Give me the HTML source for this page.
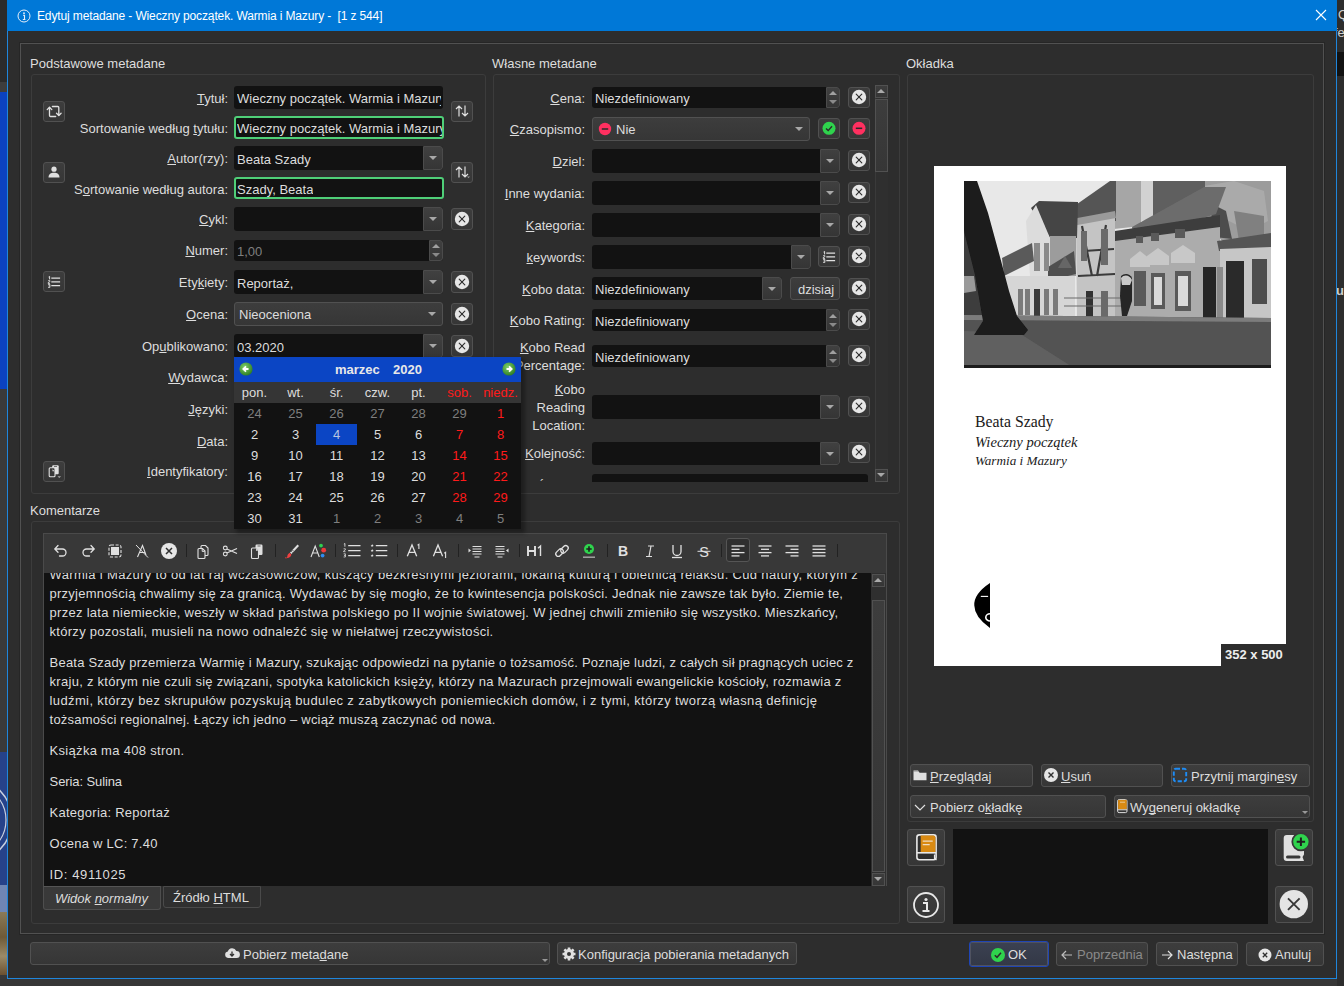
<!DOCTYPE html><html><head><meta charset="utf-8"><style>
*{margin:0;padding:0;box-sizing:border-box}
html,body{width:1344px;height:986px;overflow:hidden;background:#2d2d2d}
body{position:relative;font-family:"Liberation Sans",sans-serif;font-size:13px;color:#dddddd}
.a{position:absolute}
.t{position:absolute;white-space:nowrap;line-height:16px;height:16px}
.r{text-align:right}
u{text-decoration:underline;text-underline-offset:1px;text-decoration-thickness:1px;text-decoration-skip-ink:none}
.inp{position:absolute;background:#121212;border-radius:3px}
.btn{position:absolute;background:linear-gradient(#3d3d3d,#363636);border:1px solid #515151;border-radius:3px}
.dd{position:absolute;background:linear-gradient(#404040,#353535);border:1px solid #4b4b4b;border-radius:0 3px 3px 0}
.arr{position:absolute;width:0;height:0;border-left:4px solid transparent;border-right:4px solid transparent;border-top:4px solid #a8a8a8}
.grp{position:absolute;border:1px solid #3c3c3c;border-radius:3px}
.svg{position:absolute;overflow:visible}
.cm{letter-spacing:0.25px}
</style></head><body><div class="a " style="left:0px;top:0px;width:7px;height:82px;background:#2b2b2b"></div><div class="a " style="left:0px;top:82px;width:7px;height:10px;background:#3d3d3d"></div><div class="a " style="left:0px;top:92px;width:7px;height:297px;background:#0b42c0"></div><div class="a " style="left:0px;top:389px;width:7px;height:363px;background:#3a3a3a"></div><div class="a " style="left:0px;top:752px;width:7px;height:133px;background:#26428a"></div><svg class="svg" style="left:-40px;top:770px" width="50" height="110" viewBox="0 0 50 110"><circle cx="10" cy="50" r="42" fill="none" stroke="#c8d0e0" stroke-width="1.5"/><circle cx="10" cy="50" r="36" fill="none" stroke="#c8d0e0" stroke-width="1.2"/></svg><div class="a " style="left:0px;top:885px;width:7px;height:27px;background:#6f86b5"></div><div class="a " style="left:0px;top:912px;width:7px;height:63px;background:linear-gradient(#8a7a58,#6e5a38 40%,#9a8a68 70%,#6a5030)"></div><div class="a " style="left:0px;top:975px;width:7px;height:4px;background:#383838"></div><div class="a " style="left:0px;top:979px;width:1344px;height:7px;background:#363636"></div><div class="a " style="left:1337px;top:0px;width:7px;height:986px;background:#2d2d2d"></div><div class="a " style="left:1337px;top:52px;width:7px;height:24px;background:#121212"></div><div class="a" style="left:1337px;top:0;width:7px;height:986px;overflow:hidden"><div class="t" style="left:1px;top:7px;color:#cfcfcf">Q</div><div class="t" style="left:-3px;top:25px;color:#cfcfcf">fe</div><div class="t" style="left:-1px;top:283px;color:#cfcfcf;font-weight:bold">ur</div></div><div class="a " style="left:7px;top:0px;width:1330px;height:979px;background:#2d2d2d;border:1px solid #1f86dc;border-top:none"></div><div class="a " style="left:7px;top:0px;width:1330px;height:31px;background:#0078d7"></div><svg class="svg" style="left:17px;top:9px" width="14" height="14" viewBox="0 0 14 14"><circle cx="7" cy="7" r="6" fill="none" stroke="#e6eef8" stroke-width="1"/><circle cx="7" cy="4.2" r="0.9" fill="#e6eef8"/><path d="M6 6.3h1.5v4.2M5.8 10.5h2.6" stroke="#e6eef8" stroke-width="1.1" fill="none"/></svg><div class="t" style="left:37px;top:8px;font-size:12px;color:#ffffff;letter-spacing:-0.13px">Edytuj metadane - Wieczny początek. Warmia i Mazury -&nbsp; [1 z 544]</div><svg class="svg" style="left:1315px;top:9px" width="12" height="12" viewBox="0 0 12 12"><path d="M1 1L11 11M11 1L1 11" stroke="#ffffff" stroke-width="1.1"/></svg><div class="a " style="left:20px;top:43px;width:1304px;height:891px;border:1px solid #515151;box-shadow:0 0 0 1px #262626"></div><div class="grp" style="left:31px;top:74px;width:455px;height:420px"></div><div class="grp" style="left:493px;top:74px;width:407px;height:420px"></div><div class="grp" style="left:907px;top:74px;width:407px;height:748px"></div><div class="grp" style="left:31px;top:521px;width:869px;height:403px"></div><div class="t" style="left:30px;top:56px;">Podstawowe metadane</div><div class="t" style="left:492px;top:56px;">Własne metadane</div><div class="t" style="left:906px;top:56px;">Okładka</div><div class="t" style="left:30px;top:503px;">Komentarze</div><div class="t r" style="right:1116px;top:91px;"><u>T</u>ytuł:</div><div class="t r" style="right:1116px;top:121px;">Sortowanie według <u>t</u>ytułu:</div><div class="t r" style="right:1116px;top:151px;"><u>A</u>utor(rzy):</div><div class="t r" style="right:1116px;top:182px;">S<u>o</u>rtowanie według autora:</div><div class="t r" style="right:1116px;top:212px;"><u>C</u>ykl:</div><div class="t r" style="right:1116px;top:243px;"><u>N</u>umer:</div><div class="t r" style="right:1116px;top:275px;">Ety<u>k</u>iety:</div><div class="t r" style="right:1116px;top:307px;"><u>O</u>cena:</div><div class="t r" style="right:1116px;top:339px;">Op<u>u</u>blikowano:</div><div class="t r" style="right:1116px;top:370px;"><u>W</u>ydawca:</div><div class="t r" style="right:1116px;top:402px;"><u>J</u>ęzyki:</div><div class="t r" style="right:1116px;top:434px;"><u>D</u>ata:</div><div class="t r" style="right:1116px;top:464px;"><u>I</u>dentyfikatory:</div><div class="inp" style="left:234px;top:86px;width:209px;height:23px;"></div><div class="t" style="left:237px;top:91px;color:#dddddd;max-width:204px;overflow:hidden">Wieczny początek. Warmia i Mazury</div><div class="inp" style="left:234px;top:116px;width:210px;height:23px;border:2px solid #4fcf78"></div><div class="t" style="left:237px;top:121px;color:#dddddd;max-width:205px;overflow:hidden">Wieczny początek. Warmia i Mazury</div><div class="inp" style="left:234px;top:146px;width:209px;height:24px;"></div><div class="t" style="left:237px;top:152px;color:#dddddd;max-width:204px;overflow:hidden">Beata Szady</div><div class="dd" style="left:423px;top:146px;width:20px;height:24px"></div><div class="arr" style="left:429.0px;top:156.0px;border-top-color:#a8a8a8"></div><div class="inp" style="left:234px;top:177px;width:210px;height:22px;border:2px solid #4fcf78"></div><div class="t" style="left:237px;top:182px;color:#dddddd;max-width:205px;overflow:hidden">Szady, Beata</div><div class="inp" style="left:234px;top:207px;width:209px;height:24px;"></div><div class="dd" style="left:423px;top:207px;width:20px;height:24px"></div><div class="arr" style="left:429.0px;top:217.0px;border-top-color:#a8a8a8"></div><div class="inp" style="left:234px;top:240px;width:209px;height:21px;"></div><div class="t" style="left:237px;top:244px;color:#7f7f7f;max-width:204px;overflow:hidden">1,00</div><div class="dd" style="left:429px;top:240px;width:14px;height:21px"></div><div class="arr" style="left:432.0px;top:244.0px;border-top:none;border-bottom:4px solid #a0a0a0"></div><div class="arr" style="left:432.0px;top:253.0px;border-top-color:#8a8a8a"></div><div class="inp" style="left:234px;top:270px;width:209px;height:24px;"></div><div class="t" style="left:237px;top:276px;color:#dddddd;max-width:204px;overflow:hidden">Reportaż,</div><div class="dd" style="left:423px;top:270px;width:20px;height:24px"></div><div class="arr" style="left:429.0px;top:280.0px;border-top-color:#a8a8a8"></div><div class="btn" style="left:234px;top:302px;width:209px;height:24px;"></div><div class="t" style="left:239px;top:307px;">Nieoceniona</div><div class="arr" style="left:428px;top:312px;border-top-color:#a8a8a8"></div><div class="inp" style="left:234px;top:334px;width:209px;height:24px;"></div><div class="t" style="left:237px;top:340px;color:#dddddd;max-width:204px;overflow:hidden">03.2020</div><div class="dd" style="left:423px;top:334px;width:20px;height:24px"></div><div class="arr" style="left:429.0px;top:344.0px;border-top-color:#a8a8a8"></div><div class="btn" style="left:43px;top:101px;width:22px;height:21px;"></div><svg class="svg" style="left:46px;top:103px" width="16" height="16" viewBox="0 0 16 16"><g fill="none" stroke="#e0e0e0" stroke-width="1.3" stroke-linecap="round" stroke-linejoin="round"><path d="M3.5 4.5V12.5Q3.5 13.5 4.5 13.5H9.7"/><path d="M1.2 6.6L3.5 4.2L5.8 6.6"/><path d="M6.4 3.5H11.8Q12.8 3.5 12.8 4.5V12.3"/><path d="M10.5 10.2L12.8 12.5L15.1 10.2"/></g></svg><div class="btn" style="left:43px;top:162px;width:22px;height:21px;"></div><svg class="svg" style="left:46px;top:164px" width="16" height="16" viewBox="0 0 16 16"><circle cx="8" cy="5.2" r="2.6" fill="#e0e0e0"/><path d="M2.5 13.5C2.5 10 5 8.8 8 8.8S13.5 10 13.5 13.5Z" fill="#e0e0e0"/></svg><div class="btn" style="left:43px;top:271px;width:22px;height:21px;"></div><svg class="svg" style="left:46px;top:273.5px" width="16" height="16" viewBox="0 0 16 16"><path d="M2.6 3L3.6 2.4V5.4" stroke="#e0e0e0" stroke-width="1" fill="none"/><path d="M2.1 6.7h1.8v0.9l-1.8 1.1v0.7h1.9" stroke="#e0e0e0" stroke-width="0.9" fill="none"/><path d="M2.1 10.4h1.8v3h-1.8M2.5 11.9h1.4" stroke="#e0e0e0" stroke-width="0.9" fill="none"/><path d="M5.3 4.1h8.8M5.3 7.9h8.8M5.3 11.6h8.8" stroke="#e0e0e0" stroke-width="1.3"/></svg><div class="btn" style="left:43px;top:461px;width:22px;height:21px;"></div><svg class="svg" style="left:46px;top:463px" width="16" height="16" viewBox="0 0 16 16"><rect x="6.2" y="2.2" width="6.5" height="9" rx="1" fill="#e0e0e0"/><rect x="3.2" y="4.8" width="5.8" height="9" rx="1" fill="#383838" stroke="#e0e0e0" stroke-width="1.1"/><path d="M6.5 6.2L8.6 8.2H6.5Z" fill="#e0e0e0"/><rect x="8" y="3.2" width="3" height="0.8" fill="#555"/><path d="M11.5 13.2h3.6l-1.8 1.8z" fill="#aaa"/></svg><div class="btn" style="left:451px;top:101px;width:22px;height:21px;"></div><svg class="svg" style="left:454px;top:103px" width="16" height="16" viewBox="0 0 16 16"><path d="M5 13.5V3M2 6L5 3L8 6M11 2.5V13M8 10L11 13L14 10" fill="none" stroke="#e0e0e0" stroke-width="1.2"/></svg><div class="btn" style="left:451px;top:162px;width:22px;height:21px;"></div><svg class="svg" style="left:454px;top:164px" width="16" height="16" viewBox="0 0 16 16"><path d="M5 13.5V3M2 6L5 3L8 6M11 2.5V13M8 10L11 13L14 10" fill="none" stroke="#e0e0e0" stroke-width="1.2"/><path d="M13 12.5h3l-1.5 1.8z" fill="#9a9a9a"/></svg><div class="btn" style="left:451px;top:208px;width:22px;height:22px;"></div><svg class="svg" style="left:452px;top:208.5px" width="20" height="20" viewBox="0 0 20 20"><circle cx="10" cy="10" r="7.2" fill="#e6e6e6"/><path d="M7.2 7.2L12.8 12.8M12.8 7.2L7.2 12.8" stroke="#2f2f2f" stroke-width="1.15" stroke-linecap="round"/></svg><div class="btn" style="left:451px;top:271px;width:22px;height:22px;"></div><svg class="svg" style="left:452px;top:271.5px" width="20" height="20" viewBox="0 0 20 20"><circle cx="10" cy="10" r="7.2" fill="#e6e6e6"/><path d="M7.2 7.2L12.8 12.8M12.8 7.2L7.2 12.8" stroke="#2f2f2f" stroke-width="1.15" stroke-linecap="round"/></svg><div class="btn" style="left:451px;top:303px;width:22px;height:22px;"></div><svg class="svg" style="left:452px;top:303.5px" width="20" height="20" viewBox="0 0 20 20"><circle cx="10" cy="10" r="7.2" fill="#e6e6e6"/><path d="M7.2 7.2L12.8 12.8M12.8 7.2L7.2 12.8" stroke="#2f2f2f" stroke-width="1.15" stroke-linecap="round"/></svg><div class="btn" style="left:451px;top:335px;width:22px;height:22px;"></div><svg class="svg" style="left:452px;top:335.5px" width="20" height="20" viewBox="0 0 20 20"><circle cx="10" cy="10" r="7.2" fill="#e6e6e6"/><path d="M7.2 7.2L12.8 12.8M12.8 7.2L7.2 12.8" stroke="#2f2f2f" stroke-width="1.15" stroke-linecap="round"/></svg><div class="t r" style="right:759px;top:91px;"><u>C</u>ena:</div><div class="t r" style="right:759px;top:122px;"><u>C</u>zasopismo:</div><div class="t r" style="right:759px;top:154px;"><u>D</u>ziel:</div><div class="t r" style="right:759px;top:186px;"><u>I</u>nne wydania:</div><div class="t r" style="right:759px;top:218px;"><u>K</u>ategoria:</div><div class="t r" style="right:759px;top:250px;"><u>k</u>eywords:</div><div class="t r" style="right:759px;top:282px;"><u>K</u>obo data:</div><div class="t r" style="right:759px;top:313px;"><u>K</u>obo Rating:</div><div class="t r" style="right:759px;top:340px;"><u>K</u>obo Read</div><div class="t r" style="right:759px;top:358px;">Percentage:</div><div class="t r" style="right:759px;top:382px;"><u>K</u>obo</div><div class="t r" style="right:759px;top:400px;">Reading</div><div class="t r" style="right:759px;top:418px;">Location:</div><div class="t r" style="right:759px;top:446px;"><u>K</u>olejność:</div><div class="inp" style="left:592px;top:87px;width:248px;height:21px;"></div><div class="t" style="left:595px;top:91px;color:#dddddd;max-width:243px;overflow:hidden">Niezdefiniowany</div><div class="dd" style="left:826px;top:87px;width:14px;height:21px"></div><div class="arr" style="left:829.0px;top:91.0px;border-top:none;border-bottom:4px solid #a0a0a0"></div><div class="arr" style="left:829.0px;top:100.0px;border-top-color:#8a8a8a"></div><div class="btn" style="left:592px;top:117px;width:218px;height:24px;"></div><svg class="svg" style="left:598px;top:122px" width="14" height="14" viewBox="0 0 14 14"><circle cx="7" cy="7" r="6.2" fill="#ff3060"/><path d="M3.8 7h6.4" stroke="#2a2a2a" stroke-width="1.5"/></svg><div class="t" style="left:616px;top:122px;">Nie</div><div class="arr" style="left:795px;top:127px;border-top-color:#a8a8a8"></div><div class="inp" style="left:592px;top:149px;width:248px;height:24px;"></div><div class="dd" style="left:820px;top:149px;width:20px;height:24px"></div><div class="arr" style="left:826.0px;top:159.0px;border-top-color:#a8a8a8"></div><div class="inp" style="left:592px;top:181px;width:248px;height:24px;"></div><div class="dd" style="left:820px;top:181px;width:20px;height:24px"></div><div class="arr" style="left:826.0px;top:191.0px;border-top-color:#a8a8a8"></div><div class="inp" style="left:592px;top:213px;width:248px;height:24px;"></div><div class="dd" style="left:820px;top:213px;width:20px;height:24px"></div><div class="arr" style="left:826.0px;top:223.0px;border-top-color:#a8a8a8"></div><div class="inp" style="left:592px;top:245px;width:219px;height:24px;"></div><div class="dd" style="left:791px;top:245px;width:20px;height:24px"></div><div class="arr" style="left:797.0px;top:255.0px;border-top-color:#a8a8a8"></div><div class="inp" style="left:592px;top:277px;width:190px;height:23px;"></div><div class="t" style="left:595px;top:282px;color:#dddddd;max-width:185px;overflow:hidden">Niezdefiniowany</div><div class="dd" style="left:762px;top:277px;width:20px;height:23px"></div><div class="arr" style="left:768.0px;top:286.5px;border-top-color:#a8a8a8"></div><div class="btn" style="left:790px;top:277px;width:50px;height:23px;"></div><div class="t" style="left:798px;top:282px;">dzisiaj</div><div class="inp" style="left:592px;top:309px;width:248px;height:22px;"></div><div class="t" style="left:595px;top:314px;color:#dddddd;max-width:243px;overflow:hidden">Niezdefiniowany</div><div class="dd" style="left:826px;top:309px;width:14px;height:22px"></div><div class="arr" style="left:829.0px;top:313.5px;border-top:none;border-bottom:4px solid #a0a0a0"></div><div class="arr" style="left:829.0px;top:322.5px;border-top-color:#8a8a8a"></div><div class="inp" style="left:592px;top:345px;width:248px;height:22px;"></div><div class="t" style="left:595px;top:350px;color:#dddddd;max-width:243px;overflow:hidden">Niezdefiniowany</div><div class="dd" style="left:826px;top:345px;width:14px;height:22px"></div><div class="arr" style="left:829.0px;top:349.5px;border-top:none;border-bottom:4px solid #a0a0a0"></div><div class="arr" style="left:829.0px;top:358.5px;border-top-color:#8a8a8a"></div><div class="inp" style="left:592px;top:395px;width:248px;height:24px;"></div><div class="dd" style="left:820px;top:395px;width:20px;height:24px"></div><div class="arr" style="left:826.0px;top:405.0px;border-top-color:#a8a8a8"></div><div class="inp" style="left:592px;top:442px;width:248px;height:23px;"></div><div class="dd" style="left:820px;top:442px;width:20px;height:23px"></div><div class="arr" style="left:826.0px;top:451.5px;border-top-color:#a8a8a8"></div><div class="a" style="left:592px;top:474px;width:280px;height:8px;overflow:hidden"><div class="inp" style="left:0;top:0;width:276px;height:23px"></div><div class="t" style="left:4px;top:5px">1,00</div></div><div class="a" style="left:500px;top:474px;width:86px;height:8px;overflow:hidden"><div class="t r" style="right:0;top:5px">Ścieżka:</div></div><div class="btn" style="left:848px;top:87px;width:22px;height:21px;"></div><svg class="svg" style="left:849px;top:87px" width="20" height="20" viewBox="0 0 20 20"><circle cx="10" cy="10" r="7.2" fill="#e6e6e6"/><path d="M7.2 7.2L12.8 12.8M12.8 7.2L7.2 12.8" stroke="#2f2f2f" stroke-width="1.15" stroke-linecap="round"/></svg><div class="btn" style="left:848px;top:150px;width:22px;height:21px;"></div><svg class="svg" style="left:849px;top:150px" width="20" height="20" viewBox="0 0 20 20"><circle cx="10" cy="10" r="7.2" fill="#e6e6e6"/><path d="M7.2 7.2L12.8 12.8M12.8 7.2L7.2 12.8" stroke="#2f2f2f" stroke-width="1.15" stroke-linecap="round"/></svg><div class="btn" style="left:848px;top:182px;width:22px;height:21px;"></div><svg class="svg" style="left:849px;top:182px" width="20" height="20" viewBox="0 0 20 20"><circle cx="10" cy="10" r="7.2" fill="#e6e6e6"/><path d="M7.2 7.2L12.8 12.8M12.8 7.2L7.2 12.8" stroke="#2f2f2f" stroke-width="1.15" stroke-linecap="round"/></svg><div class="btn" style="left:848px;top:214px;width:22px;height:21px;"></div><svg class="svg" style="left:849px;top:214px" width="20" height="20" viewBox="0 0 20 20"><circle cx="10" cy="10" r="7.2" fill="#e6e6e6"/><path d="M7.2 7.2L12.8 12.8M12.8 7.2L7.2 12.8" stroke="#2f2f2f" stroke-width="1.15" stroke-linecap="round"/></svg><div class="btn" style="left:848px;top:246px;width:22px;height:21px;"></div><svg class="svg" style="left:849px;top:246px" width="20" height="20" viewBox="0 0 20 20"><circle cx="10" cy="10" r="7.2" fill="#e6e6e6"/><path d="M7.2 7.2L12.8 12.8M12.8 7.2L7.2 12.8" stroke="#2f2f2f" stroke-width="1.15" stroke-linecap="round"/></svg><div class="btn" style="left:848px;top:278px;width:22px;height:21px;"></div><svg class="svg" style="left:849px;top:278px" width="20" height="20" viewBox="0 0 20 20"><circle cx="10" cy="10" r="7.2" fill="#e6e6e6"/><path d="M7.2 7.2L12.8 12.8M12.8 7.2L7.2 12.8" stroke="#2f2f2f" stroke-width="1.15" stroke-linecap="round"/></svg><div class="btn" style="left:848px;top:309px;width:22px;height:21px;"></div><svg class="svg" style="left:849px;top:309px" width="20" height="20" viewBox="0 0 20 20"><circle cx="10" cy="10" r="7.2" fill="#e6e6e6"/><path d="M7.2 7.2L12.8 12.8M12.8 7.2L7.2 12.8" stroke="#2f2f2f" stroke-width="1.15" stroke-linecap="round"/></svg><div class="btn" style="left:848px;top:345px;width:22px;height:21px;"></div><svg class="svg" style="left:849px;top:345px" width="20" height="20" viewBox="0 0 20 20"><circle cx="10" cy="10" r="7.2" fill="#e6e6e6"/><path d="M7.2 7.2L12.8 12.8M12.8 7.2L7.2 12.8" stroke="#2f2f2f" stroke-width="1.15" stroke-linecap="round"/></svg><div class="btn" style="left:848px;top:396px;width:22px;height:21px;"></div><svg class="svg" style="left:849px;top:396px" width="20" height="20" viewBox="0 0 20 20"><circle cx="10" cy="10" r="7.2" fill="#e6e6e6"/><path d="M7.2 7.2L12.8 12.8M12.8 7.2L7.2 12.8" stroke="#2f2f2f" stroke-width="1.15" stroke-linecap="round"/></svg><div class="btn" style="left:848px;top:442px;width:22px;height:21px;"></div><svg class="svg" style="left:849px;top:442px" width="20" height="20" viewBox="0 0 20 20"><circle cx="10" cy="10" r="7.2" fill="#e6e6e6"/><path d="M7.2 7.2L12.8 12.8M12.8 7.2L7.2 12.8" stroke="#2f2f2f" stroke-width="1.15" stroke-linecap="round"/></svg><div class="btn" style="left:818px;top:118px;width:22px;height:21px;"></div><svg class="svg" style="left:822px;top:121px" width="14" height="14" viewBox="0 0 14 14"><circle cx="7" cy="7.3" r="6.5" fill="#2fd34d"/><path d="M4 7.5L6.2 9.6L10 5.2" fill="none" stroke="#2a2a2a" stroke-width="1.4"/></svg><div class="btn" style="left:848px;top:118px;width:22px;height:21px;"></div><svg class="svg" style="left:852px;top:121px" width="14" height="14" viewBox="0 0 14 14"><circle cx="7" cy="7.3" r="6.5" fill="#ff3060"/><path d="M3.8 7.3h6.4" stroke="#2a2a2a" stroke-width="1.5"/></svg><div class="btn" style="left:818px;top:246px;width:22px;height:21px;"></div><svg class="svg" style="left:821px;top:248.5px" width="16" height="16" viewBox="0 0 16 16"><path d="M2.6 3L3.6 2.4V5.4" stroke="#e0e0e0" stroke-width="1" fill="none"/><path d="M2.1 6.7h1.8v0.9l-1.8 1.1v0.7h1.9" stroke="#e0e0e0" stroke-width="0.9" fill="none"/><path d="M2.1 10.4h1.8v3h-1.8M2.5 11.9h1.4" stroke="#e0e0e0" stroke-width="0.9" fill="none"/><path d="M5.3 4.1h8.8M5.3 7.9h8.8M5.3 11.6h8.8" stroke="#e0e0e0" stroke-width="1.3"/></svg><div class="a " style="left:875px;top:85px;width:13px;height:397px;background:#2f2f2f;border-left:1px solid #3a3a3a"></div><div class="btn" style="left:875px;top:85px;width:13px;height:13px;border-radius:0"></div><div class="arr" style="left:877px;top:89px;border-top:none;border-bottom:4px solid #aaa"></div><div class="btn" style="left:875px;top:99px;width:13px;height:73px;border-radius:0"></div><div class="btn" style="left:875px;top:469px;width:13px;height:13px;border-radius:0"></div><div class="arr" style="left:877px;top:473px;border-top-color:#a8a8a8"></div><div class="a " style="left:934px;top:166px;width:352px;height:500px;background:#ffffff"></div><svg class="svg" style="left:964px;top:181px" width="307" height="187" viewBox="0 0 307 187">
<defs><filter id="pb" x="0" y="0" width="1" height="1"><feGaussianBlur stdDeviation="0.5"/></filter></defs>
<g filter="url(#pb)">
<rect x="0" y="0" width="307" height="187" fill="#e8e8e8"/>
<!-- right side foliage -->
<path d="M230 0 L307 0 L307 62 L260 62 L240 40Z" fill="#9c9c9c"/>
<path d="M240 5 L270 0 L300 10 L304 40 L285 50 L255 35Z" fill="#aaaaaa"/>
<path d="M270 30 L300 35 L300 58 L275 60Z" fill="#808080"/>
<path d="M246 22 L262 30 L268 58 L250 56Z" fill="#4e4e4e"/>
<!-- upper brick & chimney -->
<path d="M189 0 L241 0 L241 20 L189 36Z" fill="#5e5e5e"/>
<path d="M177 0 L189 0 L189 38 L177 40Z" fill="#d2d2d2"/>
<path d="M150 0 L177 0 L177 45 L150 48Z" fill="#a6a6a6"/>
<path d="M106 28 L146 0 L152 0 L152 40 L108 40Z" fill="#555555"/>
<!-- main roof -->
<path d="M168 46 L240 6 L262 6 L252 33 L170 58Z" fill="#6c6c6c"/>
<path d="M151 50 L256 34 L256 48 L151 62Z" fill="#3c3c3c"/>
<!-- brick building wall -->
<path d="M151 60 L256 46 L256 137 L151 137Z" fill="#acacac"/>
<!-- right roof + building -->
<path d="M253 60 L307 52 L307 72 L255 70Z" fill="#555555"/>
<path d="M256 68 L307 66 L307 138 L256 138Z" fill="#c6c6c6"/>
<rect x="288" y="78" width="15" height="45" fill="#4e4e4e"/>
<rect x="262" y="80" width="18" height="58" fill="#2c2c2c"/>
<rect x="239" y="86" width="13" height="52" fill="#262626"/>
<rect x="253" y="86" width="6" height="52" fill="#8a8a8a"/>
<!-- brick building windows/pediments -->
<g fill="#c8c8c8">
<path d="M166 78 L176 70 L186 78 L186 86 L166 86Z"/><path d="M183 75 L194 67 L205 75 L205 84 L183 84Z"/><path d="M207 72 L219 64 L231 72 L231 82 L207 82Z"/>
</g>
<g fill="#5a5a5a"><rect x="170" y="90" width="12" height="35"/><rect x="187" y="92" width="14" height="36"/><rect x="211" y="90" width="16" height="40"/>
<rect x="172" y="55" width="7" height="7"/><rect x="187" y="52" width="8" height="8"/><rect x="211" y="48" width="10" height="9"/></g>
<g fill="#dadada"><rect x="190" y="96" width="8" height="28"/><rect x="214" y="95" width="10" height="30"/></g>
<!-- half timbered building -->
<path d="M112 40 L151 36 L151 137 L113 137Z" fill="#c4c4c4"/>
<path d="M108 38 L151 30 L152 37 L108 45Z" fill="#9a9a9a"/>
<g stroke="#3a3a3a" stroke-width="2.2" fill="none"><path d="M118 45 L128 95 M142 44 L133 95 M120 70 L150 68 M114 95 L151 93"/></g>
<g fill="#6a6a6a"><rect x="117" y="50" width="6" height="30"/><rect x="137" y="48" width="7" height="36"/><rect x="122" y="110" width="7" height="26" fill="#333"/><rect x="137" y="110" width="7" height="26"/></g>
<!-- white house -->
<path d="M67 27 L75 20 L114 21 L113 57 L86 57 Z" fill="#444444"/>
<path d="M62 40 L72 24 L86 57 L86 95 L66 95Z" fill="#dcdcdc"/>
<path d="M86 55 L112 55 L112 95 L86 95Z" fill="#9c9c9c"/>
<path d="M38 77 L68 62 L70 80 L40 95Z" fill="#5a5a5a"/>
<path d="M84 86 L110 70 L112 93 L84 100Z" fill="#505050"/>
<rect x="70" y="62" width="6" height="28" fill="#8a8a8a"/><rect x="80" y="62" width="5" height="28" fill="#8a8a8a"/>
<path d="M40 95 L111 95 L111 136 L40 136Z" fill="#d6d6d6"/>
<g fill="#7a7a7a"><rect x="54" y="108" width="5" height="26"/><rect x="61" y="108" width="5" height="26"/><rect x="80" y="108" width="5" height="26"/><rect x="89" y="108" width="5" height="26"/></g>
<rect x="70" y="108" width="6" height="28" fill="#3a3a3a"/>
<path d="M101 75 L108 87 L94 87Z" fill="#666"/>
<!-- railing & cyclist -->
<g stroke="#6a6a6a" stroke-width="1"><path d="M100 117 L160 117 M100 125 L160 125"/></g>
<path d="M157 95 C160 92 166 92 168 97 L168 120 L163 135 L158 135 L156 115Z" fill="#252525"/>
<path d="M157 97 C160 93 166 94 168 99 L166 104 L158 104Z" fill="#c8c8c8"/>
<!-- road -->
<path d="M0 134 L307 137 L307 187 L0 187Z" fill="#525252"/>
<path d="M0 134 L307 137 L307 141 L0 139Z" fill="#7c7c7c"/>
<path d="M0 150 L55 152 L110 187 L0 187Z" fill="#606060"/>
<!-- left foliage -->
<path d="M0 50 L14 55 L20 134 L0 134Z" fill="#3e3e3e"/>
<path d="M0 95 L10 95 L12 110 L0 112Z" fill="#9a9a9a"/>
<!-- trunk -->
<path d="M0 0 L13 0 L24 32 L36 76 L45 110 L53 135 L64 149 L60 154 L10 154 L19 140 L11 94 L0 50Z" fill="#1a1a1a"/>
<rect x="0" y="184" width="307" height="3" fill="#1e1e1e"/>
</g>
</svg><div class="t" style="left:975px;top:413px;font-family:'Liberation Serif',serif;font-size:15.8px;color:#1a1a1a;line-height:18px;height:18px">Beata Szady</div><div class="t" style="left:975px;top:433px;font-family:'Liberation Serif',serif;font-size:14.6px;color:#1a1a1a;line-height:18px;height:18px"><i>Wieczny początek</i></div><div class="t" style="left:975px;top:453px;font-family:'Liberation Serif',serif;font-size:13.2px;color:#1a1a1a;line-height:16px;height:16px"><i>Warmia i Mazury</i></div><svg class="svg" style="left:974px;top:583px" width="16" height="45" viewBox="0 0 16 45"><path d="M16 0 Q-0.5 11 0.3 22.5 Q0.5 34 16 45Z" fill="#000"/><path d="M6.8 13.4H14.1" stroke="#fff" stroke-width="1.1"/><path d="M16 30.8A4.2 3.6 0 0 0 16 38" fill="none" stroke="#fff" stroke-width="1.6"/></svg><div class="a " style="left:1221px;top:644px;width:65px;height:22px;background:#2d2d2d"></div><div class="t" style="left:1225px;top:647px;font-weight:bold;color:#eeeeee">352 x 500</div><div class="btn" style="left:910px;top:764px;width:123px;height:23px;"></div><div class="btn" style="left:1041px;top:764px;width:122px;height:23px;"></div><div class="btn" style="left:1171px;top:764px;width:139px;height:23px;"></div><div class="btn" style="left:910px;top:795px;width:196px;height:23px;"></div><div class="btn" style="left:1114px;top:795px;width:196px;height:23px;"></div><svg class="svg" style="left:912px;top:767px" width="16" height="16" viewBox="0 0 16 16"><path d="M1.5 4.5h5l1.2 1.3h6.8v7.5h-13z" fill="#e0e0e0"/><path d="M1.5 3.5h4.5l1 1h-5.5z" fill="#e0e0e0"/></svg><div class="t" style="left:930px;top:769px;"><u>P</u>rzeglądaj</div><svg class="svg" style="left:1043px;top:767px" width="16" height="16" viewBox="0 0 16 16"><circle cx="8" cy="8" r="7" fill="#e6e6e6"/><path d="M5.5 5.5L10.5 10.5M10.5 5.5L5.5 10.5" stroke="#2f2f2f" stroke-width="1.4"/></svg><div class="t" style="left:1061px;top:769px;"><u>U</u>suń</div><svg class="svg" style="left:1172px;top:767px" width="16" height="16" viewBox="0 0 16 16"><rect x="1.8" y="1.8" width="12.4" height="12.4" rx="2" fill="none" stroke="#1e8cf5" stroke-width="1.9" stroke-dasharray="4.2 2"/></svg><div class="t" style="left:1191px;top:769px;">Przytnij margin<u>e</u>sy</div><svg class="svg" style="left:912px;top:799px" width="16" height="16" viewBox="0 0 16 16"><path d="M3 6L8 11L13 6" fill="none" stroke="#e0e0e0" stroke-width="1.2"/></svg><div class="t" style="left:930px;top:800px;">Pobierz o<u>k</u>ładkę</div><svg class="svg" style="left:1115px;top:797px" width="14" height="18" viewBox="0 0 14 18"><rect x="2.6" y="2.6" width="9.4" height="13" rx="1.5" fill="#333" stroke="#dcdcdc" stroke-width="1"/><rect x="3.1" y="2.9" width="8.6" height="9.6" fill="#d98a12"/><path d="M2.6 12.8H12" stroke="#dcdcdc" stroke-width="1"/><path d="M5 5.2h5" stroke="#f0d8b0" stroke-width="0.8"/></svg><div class="t" style="left:1130px;top:800px;">Wy<u>g</u>eneruj okładkę</div><div class="arr" style="left:1302px;top:811px;border-left-width:3px;border-right-width:3px;border-top-width:3px;border-top-color:#999"></div><div class="btn" style="left:907px;top:829px;width:38px;height:37px;"></div><div class="btn" style="left:907px;top:886px;width:38px;height:37px;"></div><div class="btn" style="left:1275px;top:829px;width:38px;height:37px;"></div><div class="btn" style="left:1275px;top:886px;width:38px;height:37px;"></div><div class="a " style="left:953px;top:829px;width:315px;height:95px;background:#121212"></div><svg class="svg" style="left:914px;top:832px" width="26" height="30" viewBox="0 0 26 30"><rect x="2.9" y="2.9" width="19.2" height="24.8" rx="2.5" fill="#2f2f2f" stroke="#e8e8e8" stroke-width="1.6"/><path d="M6.7 3.6H19.4Q21.4 3.6 21.4 5.6V20.8H6.7Z" fill="#d98a12"/><path d="M2.9 20.8H22.1" stroke="#e8e8e8" stroke-width="1.6"/><path d="M8.7 9.2h10M8.7 12.6h7" stroke="#f0dcc0" stroke-width="1.3"/><path d="M20.5 22.5v4l2 1.5" stroke="#e8e8e8" stroke-width="1.2" fill="none"/></svg><svg class="svg" style="left:912px;top:891px" width="28" height="28" viewBox="0 0 28 28"><circle cx="14" cy="14" r="12" fill="none" stroke="#e8e8e8" stroke-width="1.8"/><circle cx="14" cy="8.5" r="1.6" fill="#e8e8e8"/><path d="M11 12h4v8M10.5 20h7" fill="none" stroke="#e8e8e8" stroke-width="2"/></svg><svg class="svg" style="left:1280px;top:832px" width="30" height="32" viewBox="0 0 30 32"><path d="M6.7 3.1H21Q24 3.1 24 6.1V22.5L22.5 25L24 29H6.7Q3.7 29 3.7 26V6.1Q3.7 3.1 6.7 3.1Z" fill="#e0e0e0"/><rect x="6" y="23.4" width="14.5" height="3.1" rx="1.5" fill="#383838"/><circle cx="20.9" cy="9.7" r="8.6" fill="#2fd34d" stroke="#383838" stroke-width="1.8"/><path d="M20.9 5.5v8.4M16.7 9.7h8.4" stroke="#1e1e1e" stroke-width="2"/></svg><svg class="svg" style="left:1279px;top:889px" width="30" height="30" viewBox="0 0 30 30"><circle cx="14.8" cy="15.1" r="14.2" fill="#e4e4e4"/><path d="M9 9.3L20.6 20.9M20.6 9.3L9 20.9" stroke="#383838" stroke-width="1.9"/></svg><div class="a " style="left:43px;top:533px;width:844px;height:40px;background:#383838;border:1px solid #4a4a4a;border-bottom:none"></div><div class="a " style="left:43px;top:573px;width:829px;height:313px;background:#121212;border-left:1px solid #4a4a4a"></div><div class="a " style="left:871px;top:573px;width:16px;height:313px;background:#2f2f2f;border-right:1px solid #4a4a4a"></div><div class="btn" style="left:872px;top:574px;width:13px;height:13px;border-radius:0"></div><div class="arr" style="left:874px;top:578px;border-top:none;border-bottom:4px solid #aaa"></div><div class="a " style="left:872px;top:588px;width:13px;height:12px;background:#2f2f2f"></div><div class="btn" style="left:872px;top:600px;width:13px;height:272px;border-radius:0"></div><div class="btn" style="left:872px;top:873px;width:13px;height:13px;border-radius:0"></div><div class="arr" style="left:874px;top:877px;border-top-color:#a8a8a8"></div><svg class="svg" style="left:53px;top:542.5px" width="16" height="16" viewBox="0 0 16 16"><g><path d="M5 2.5L1.8 6L5 9.3M2 6H9.5A3.5 3.5 0 0 1 9.5 13H6.5" fill="none" stroke="#e0e0e0" stroke-width="1.3" stroke-linecap="round"/></g></svg><svg class="svg" style="left:80px;top:542.5px" width="16" height="16" viewBox="0 0 16 16"><g transform="translate(16 0) scale(-1 1)"><path d="M5 2.5L1.8 6L5 9.3M2 6H9.5A3.5 3.5 0 0 1 9.5 13H6.5" fill="none" stroke="#e0e0e0" stroke-width="1.3" stroke-linecap="round"/></g></svg><svg class="svg" style="left:107px;top:542.5px" width="16" height="16" viewBox="0 0 16 16"><rect x="2" y="2" width="12" height="12" rx="2" fill="none" stroke="#e0e0e0" stroke-width="1.1" stroke-dasharray="3 1.6"/><rect x="4" y="4" width="8" height="8" fill="#e0e0e0"/></svg><svg class="svg" style="left:134px;top:542.5px" width="16" height="16" viewBox="0 0 16 16"><path d="M3.5 14L8.5 2.5L12 12M5.5 9.5H10.5" fill="none" stroke="#e0e0e0" stroke-width="1.1"/><path d="M2 2L14 14.5" stroke="#e0e0e0" stroke-width="1"/></svg><svg class="svg" style="left:160px;top:542px" width="18" height="18" viewBox="0 0 18 18"><circle cx="9" cy="9" r="8" fill="#e6e6e6"/><path d="M6 6L12 12M12 6L6 12" stroke="#2f2f2f" stroke-width="1.5"/></svg><div class="a" style="left:186px;top:544px;width:1px;height:13px;background:#222222"></div><svg class="svg" style="left:195px;top:542.5px" width="16" height="16" viewBox="0 0 16 16"><path d="M7 2.5h3.5l2.5 2.5v6.5a1 1 0 0 1-1 1H7a1 1 0 0 1-1-1V3.5a1 1 0 0 1 1-1z" fill="none" stroke="#e0e0e0" stroke-width="1.1"/><path d="M4 5.5h3.5l2.5 2.5v6.5a1 1 0 0 1-1 1H4a1 1 0 0 1-1-1V6.5a1 1 0 0 1 1-1z" fill="#3a3a3a" stroke="#e0e0e0" stroke-width="1.1"/><path d="M7.2 5.8v2.6h2.6" fill="none" stroke="#e0e0e0" stroke-width="1"/></svg><svg class="svg" style="left:222px;top:542.5px" width="16" height="16" viewBox="0 0 16 16"><circle cx="3.3" cy="5" r="1.9" fill="none" stroke="#e0e0e0" stroke-width="1.1"/><circle cx="3.3" cy="11" r="1.9" fill="none" stroke="#e0e0e0" stroke-width="1.1"/><path d="M4.8 6L15 10.5M4.8 10L15 5.5" stroke="#e0e0e0" stroke-width="1.2"/></svg><svg class="svg" style="left:249px;top:542.5px" width="16" height="16" viewBox="0 0 16 16"><rect x="6.5" y="1.5" width="7" height="10.5" rx="1.2" fill="#e0e0e0"/><rect x="8.5" y="2.5" width="3" height="1" fill="#666"/><path d="M3.5 5h4l2 2v7.5a1 1 0 0 1-1 1h-5a1 1 0 0 1-1-1V6a1 1 0 0 1 1-1z" fill="#3a3a3a" stroke="#e0e0e0" stroke-width="1.1"/><path d="M7 5.5L9.3 7.8H7Z" fill="#e0e0e0"/></svg><div class="a" style="left:275px;top:544px;width:1px;height:13px;background:#222222"></div><svg class="svg" style="left:282px;top:542.5px" width="18" height="16" viewBox="0 0 18 16"><path d="M8 9.5L15.5 1.5L17 3L9.5 11Z" fill="#e0e0e0"/><path d="M9.2 8.2L10.5 9.5M10.4 7L11.7 8.3" stroke="#3a3a3a" stroke-width="0.8"/><path d="M7.6 9.8L9.4 11.6C9 14 7 15.3 4.5 15C5.8 14.2 5 12.6 6 11.2Z" fill="#f04040"/><path d="M3.2 14.8C4 14.6 4.8 15 4.5 15" stroke="#f04040" stroke-width="1"/></svg><svg class="svg" style="left:310px;top:542.5px" width="16" height="16" viewBox="0 0 16 16"><path d="M1 14L5.2 3L9.3 14M2.6 10H7.8" fill="none" stroke="#e0e0e0" stroke-width="1.1"/><circle cx="11" cy="2.6" r="1.9" fill="#30d050"/><circle cx="13.7" cy="7.2" r="2.4" fill="#f03a3a"/><circle cx="12.6" cy="12.6" r="1.9" fill="#2f8cf0"/></svg><div class="a" style="left:335px;top:544px;width:1px;height:13px;background:#222222"></div><svg class="svg" style="left:343px;top:542.5px" width="18" height="16" viewBox="0 0 18 16"><path d="M0.9 1.1L1.9 0.5V3.7" stroke="#e0e0e0" stroke-width="0.9" fill="none"/><path d="M0.6 5.8h1.8v1l-1.8 1.2v0.7h1.9" stroke="#e0e0e0" stroke-width="0.8" fill="none"/><path d="M0.6 10.8h1.8v3.2h-1.8M1 12.4h1.4" stroke="#e0e0e0" stroke-width="0.8" fill="none"/><path d="M5.2 2.6h12.3M5.2 7.6h12.3M5.2 12.6h12.3" stroke="#e0e0e0" stroke-width="1.3"/></svg><svg class="svg" style="left:370px;top:542.5px" width="18" height="16" viewBox="0 0 18 16"><path transform="translate(2.2 2.6)" d="M0 -1.6L0.45 -0.5L1.6 -0.5L0.7 0.2L1 1.4L0 0.7L-1 1.4L-0.7 0.2L-1.6 -0.5L-0.45 -0.5Z" fill="#e0e0e0"/><path transform="translate(2.2 7.6)" d="M0 -1.6L0.45 -0.5L1.6 -0.5L0.7 0.2L1 1.4L0 0.7L-1 1.4L-0.7 0.2L-1.6 -0.5L-0.45 -0.5Z" fill="#e0e0e0"/><path transform="translate(2.2 12.6)" d="M0 -1.6L0.45 -0.5L1.6 -0.5L0.7 0.2L1 1.4L0 0.7L-1 1.4L-0.7 0.2L-1.6 -0.5L-0.45 -0.5Z" fill="#e0e0e0"/><path d="M5.8 2.6h11.5M5.8 7.6h11.5M5.8 12.6h11.5" stroke="#e0e0e0" stroke-width="1.3"/></svg><div class="a" style="left:397px;top:544px;width:1px;height:13px;background:#222222"></div><svg class="svg" style="left:406px;top:542.5px" width="16" height="16" viewBox="0 0 16 16"><path d="M1.3 13.3L6 1.9L10.7 13.3M3 9.4H9" fill="none" stroke="#e0e0e0" stroke-width="1.3"/><path d="M11.6 2.2L12.9 1.3V6" fill="none" stroke="#e0e0e0" stroke-width="1.1"/></svg><svg class="svg" style="left:432px;top:542.5px" width="16" height="16" viewBox="0 0 16 16"><path d="M1.4 13.3L6 1.9L10.6 13.3M3 9.4H9" fill="none" stroke="#e0e0e0" stroke-width="1.3"/><path d="M12.2 10.2L13.6 9.2V14.9" fill="none" stroke="#e0e0e0" stroke-width="1.1"/></svg><div class="a" style="left:458px;top:544px;width:1px;height:13px;background:#222222"></div><svg class="svg" style="left:467px;top:542.5px" width="16" height="16" viewBox="0 0 16 16"><path d="M1.5 5.5L4 7.5L1.5 9.5Z" fill="#e0e0e0"/><path d="M5.5 3.5h9M5.5 6h9M5.5 8.5h9M5.5 11h9M7.5 14h5" stroke="#e0e0e0" stroke-width="1"/></svg><svg class="svg" style="left:494px;top:542.5px" width="16" height="16" viewBox="0 0 16 16"><path d="M14.5 5.5L12 7.5L14.5 9.5Z" fill="#e0e0e0"/><path d="M1.5 3.5h9M1.5 6h9M1.5 8.5h9M1.5 11h9M3.5 14h5" stroke="#e0e0e0" stroke-width="1"/></svg><div class="a" style="left:519px;top:544px;width:1px;height:13px;background:#222222"></div><svg class="svg" style="left:526px;top:542.5px" width="18" height="16" viewBox="0 0 18 16"><path d="M2 3v10M9 3v10M2 8h7" stroke="#e0e0e0" stroke-width="1.9"/><path d="M12 5.2L14.5 3V13" fill="none" stroke="#e0e0e0" stroke-width="1.4"/></svg><svg class="svg" style="left:554px;top:542.5px" width="16" height="16" viewBox="0 0 16 16"><g fill="none" stroke="#e0e0e0" stroke-width="1.3"><rect x="1.3" y="7.2" width="8.5" height="5" rx="2.5" transform="rotate(-45 5.5 9.7)"/><rect x="6.2" y="3.8" width="8.5" height="5" rx="2.5" transform="rotate(-45 10.5 6.3)"/></g></svg><svg class="svg" style="left:581px;top:542.5px" width="16" height="16" viewBox="0 0 16 16"><circle cx="8" cy="6" r="5" fill="#2fd34d"/><path d="M8 3.3v5.4M5.3 6h5.4" stroke="#1e1e1e" stroke-width="1.6"/><path d="M2 14.2h12" stroke="#aaaaaa" stroke-width="1.4"/></svg><div class="a" style="left:607px;top:544px;width:1px;height:13px;background:#222222"></div><svg class="svg" style="left:615px;top:542.5px" width="16" height="16" viewBox="0 0 16 16"><text x="8" y="13" text-anchor="middle" font-family="Liberation Sans" font-weight="bold" font-size="14" fill="#e0e0e0">B</text></svg><svg class="svg" style="left:642px;top:542.5px" width="16" height="16" viewBox="0 0 16 16"><path d="M6 3h6M4 13.5h6M9 3L7 13.5" stroke="#e0e0e0" stroke-width="1.2"/></svg><svg class="svg" style="left:669px;top:542.5px" width="16" height="16" viewBox="0 0 16 16"><path d="M4 2v6.5a4 4 0 0 0 8 0V2" fill="none" stroke="#e0e0e0" stroke-width="1.3"/><path d="M3 14.5h10" stroke="#e0e0e0" stroke-width="1.3"/></svg><svg class="svg" style="left:696px;top:542.5px" width="16" height="16" viewBox="0 0 16 16"><text x="8" y="13.5" text-anchor="middle" font-family="Liberation Sans" font-size="14.5" fill="#e0e0e0">S</text><path d="M1.5 8.3h13" stroke="#e0e0e0" stroke-width="1"/></svg><div class="a" style="left:721px;top:544px;width:1px;height:13px;background:#222222"></div><div class="btn" style="left:726px;top:538px;width:24px;height:24px;background:#2f2f2f;border-color:#555"></div><svg class="svg" style="left:730px;top:542.5px" width="16" height="16" viewBox="0 0 16 16"><path d="M1.5 3h13" stroke="#e0e0e0" stroke-width="1.3"/><path d="M1.5 6.3h8" stroke="#e0e0e0" stroke-width="1.3"/><path d="M1.5 9.6h13" stroke="#e0e0e0" stroke-width="1.3"/><path d="M1.5 12.9h8" stroke="#e0e0e0" stroke-width="1.3"/></svg><svg class="svg" style="left:757px;top:542.5px" width="16" height="16" viewBox="0 0 16 16"><path d="M1.5 3h13" stroke="#e0e0e0" stroke-width="1.3"/><path d="M4.0 6.3h8" stroke="#e0e0e0" stroke-width="1.3"/><path d="M1.5 9.6h13" stroke="#e0e0e0" stroke-width="1.3"/><path d="M4.0 12.9h8" stroke="#e0e0e0" stroke-width="1.3"/></svg><svg class="svg" style="left:784px;top:542.5px" width="16" height="16" viewBox="0 0 16 16"><path d="M1.5 3h13" stroke="#e0e0e0" stroke-width="1.3"/><path d="M6.5 6.3h8" stroke="#e0e0e0" stroke-width="1.3"/><path d="M1.5 9.6h13" stroke="#e0e0e0" stroke-width="1.3"/><path d="M6.5 12.9h8" stroke="#e0e0e0" stroke-width="1.3"/></svg><svg class="svg" style="left:811px;top:542.5px" width="16" height="16" viewBox="0 0 16 16"><path d="M1.5 3h13" stroke="#e0e0e0" stroke-width="1.3"/><path d="M1.5 6.3h13" stroke="#e0e0e0" stroke-width="1.3"/><path d="M1.5 9.6h13" stroke="#e0e0e0" stroke-width="1.3"/><path d="M1.5 12.9h13" stroke="#e0e0e0" stroke-width="1.3"/></svg><div class="a" style="left:837px;top:544px;width:1px;height:13px;background:#222222"></div><div class="a" style="left:44px;top:573px;width:827px;height:313px;overflow:hidden"><div class="t" style="left:5.6px;top:-6px;letter-spacing:0.335px">Warmia i Mazury to od lat raj wczasowiczów, kuszący bezkresnymi jeziorami, lokalną kulturą i obietnicą relaksu. Cud natury, którym z</div><div class="t" style="left:5.6px;top:13px;letter-spacing:0.227px">przyjemnością chwalimy się za granicą. Wydawać by się mogło, że to kwintesencja polskości. Jednak nie zawsze tak było. Ziemie te,</div><div class="t" style="left:5.6px;top:32px;letter-spacing:0.273px">przez lata niemieckie, weszły w skład państwa polskiego po II wojnie światowej. W jednej chwili zmieniło się wszystko. Mieszkańcy,</div><div class="t" style="left:5.6px;top:51px;letter-spacing:0.277px">którzy pozostali, musieli na nowo odnaleźć się w niełatwej rzeczywistości.</div><div class="t" style="left:5.6px;top:82px;letter-spacing:0.204px">Beata Szady przemierza Warmię i Mazury, szukając odpowiedzi na pytanie o tożsamość. Poznaje ludzi, z całych sił pragnących uciec z</div><div class="t" style="left:5.6px;top:101px;letter-spacing:0.273px">kraju, z którym nie czuli się związani, spotyka katolickich księży, którzy na Mazurach przejmowali ewangelickie kościoły, rozmawia z</div><div class="t" style="left:5.6px;top:120px;letter-spacing:0.37px">ludźmi, którzy bez skrupułów pozyskują budulec z zabytkowych poniemieckich domów, i z tymi, którzy tworzą własną definicję</div><div class="t" style="left:5.6px;top:139px;letter-spacing:0.195px">tożsamości regionalnej. Łączy ich jedno – wciąż muszą zaczynać od nowa.</div><div class="t" style="left:5.6px;top:170px;letter-spacing:0.3px">Książka ma 408 stron.</div><div class="t" style="left:5.6px;top:201px;letter-spacing:-0.1px">Seria: Sulina</div><div class="t" style="left:5.6px;top:232px;letter-spacing:0.25px">Kategoria: Reportaż</div><div class="t" style="left:5.6px;top:263px;letter-spacing:0.25px">Ocena w LC: 7.40</div><div class="t" style="left:5.6px;top:294px;letter-spacing:0.6px">ID: 4911025</div></div><div class="a " style="left:43px;top:886px;width:118px;height:24px;background:#393939;border:1px solid #4e4e4e;border-top-color:#555;border-radius:0 0 3px 3px"></div><div class="t" style="left:55px;top:891px;"><i>Widok <u>n</u>ormalny</i></div><div class="a " style="left:163px;top:886px;width:98px;height:22px;background:#2f2f2f;border:1px solid #4a4a4a;border-radius:0 0 3px 3px"></div><div class="t" style="left:173px;top:890px;">Źródło <u>H</u>TML</div><div class="btn" style="left:30px;top:942px;width:520px;height:23px;"></div><div class="t" style="left:243px;top:947px;">Pobierz meta<u>d</u>ane</div><svg class="svg" style="left:224px;top:946px" width="16" height="14" viewBox="0 0 16 14"><path d="M4 12A3.3 3.3 0 0 1 3.8 5.5A4.5 4.5 0 0 1 12.3 5A3.5 3.5 0 0 1 12.5 12Z" fill="#e0e0e0"/><path d="M8 5.5v4M6 8l2 2 2-2" fill="none" stroke="#2f2f2f" stroke-width="1.3"/></svg><div class="arr" style="left:542px;top:959px;border-left-width:3px;border-right-width:3px;border-top-width:3px;border-top-color:#999"></div><div class="btn" style="left:557px;top:942px;width:240px;height:23px;"></div><svg class="svg" style="left:561px;top:946px" width="16" height="16" viewBox="0 0 16 16"><g fill="#e0e0e0"><circle cx="8" cy="8" r="5"/><g stroke="#e0e0e0" stroke-width="2.6"><path d="M8 1.5v13M1.5 8h13M3.4 3.4l9.2 9.2M12.6 3.4l-9.2 9.2"/></g></g><circle cx="8" cy="8" r="2" fill="#353535"/></svg><div class="t" style="left:578px;top:947px;">Konfiguracja pobierania metadanych</div><div class="btn" style="left:969px;top:941px;width:80px;height:26px;border-color:#1f45b5;box-shadow:inset 0 0 0 1px #4f5260;background:linear-gradient(#3b4152,#333846)"></div><svg class="svg" style="left:990px;top:947px" width="16" height="16" viewBox="0 0 16 16"><circle cx="8" cy="8" r="7" fill="#2fd34d"/><path d="M4.8 8.2L7 10.3L11 5.8" fill="none" stroke="#2a2a2a" stroke-width="1.5"/></svg><div class="t" style="left:1008px;top:947px;">OK</div><div class="btn" style="left:1056px;top:942px;width:92px;height:24px;"></div><svg class="svg" style="left:1059px;top:947px" width="16" height="16" viewBox="0 0 16 16"><path d="M13 8H3M7 4L3 8L7 12" fill="none" stroke="#bdbdbd" stroke-width="1.2"/></svg><div class="t" style="left:1077px;top:947px;color:#8a8a8a">Poprzednia</div><div class="btn" style="left:1156px;top:942px;width:82px;height:24px;"></div><svg class="svg" style="left:1159px;top:947px" width="16" height="16" viewBox="0 0 16 16"><path d="M3 8H13M9 4L13 8L9 12" fill="none" stroke="#e0e0e0" stroke-width="1.2"/></svg><div class="t" style="left:1177px;top:947px;">Następna</div><div class="btn" style="left:1246px;top:942px;width:78px;height:24px;"></div><svg class="svg" style="left:1257px;top:947px" width="16" height="16" viewBox="0 0 16 16"><circle cx="8" cy="8" r="6.5" fill="#e6e6e6"/><path d="M5.8 5.8L10.2 10.2M10.2 5.8L5.8 10.2" stroke="#2f2f2f" stroke-width="1.3"/></svg><div class="t" style="left:1275px;top:947px;">Anuluj</div><div class="a " style="left:236px;top:359px;width:289px;height:174px;background:rgba(0,0,0,0.35);filter:blur(2px)"></div><div class="a " style="left:234px;top:357px;width:287px;height:25px;background:#0b45c4"></div><div class="a " style="left:234px;top:382px;width:287px;height:21px;background:#353535"></div><div class="a " style="left:234px;top:403px;width:287px;height:126px;background:#121212"></div><svg class="svg" style="left:238px;top:361px" width="16" height="16" viewBox="0 0 16 16"><defs><radialGradient id="gg246" cx="0.4" cy="0.35" r="0.7"><stop offset="0" stop-color="#7fd06a"/><stop offset="1" stop-color="#2a7a1e"/></radialGradient></defs><circle cx="8" cy="8" r="6.6" fill="url(#gg246)"/><path d="M10.5 8H5.5M8 5.3L5.3 8L8 10.7" fill="none" stroke="#ffffff" stroke-width="1.8"/></svg><svg class="svg" style="left:501px;top:361px" width="16" height="16" viewBox="0 0 16 16"><defs><radialGradient id="gg509" cx="0.4" cy="0.35" r="0.7"><stop offset="0" stop-color="#7fd06a"/><stop offset="1" stop-color="#2a7a1e"/></radialGradient></defs><circle cx="8" cy="8" r="6.6" fill="url(#gg509)"/><path d="M5.5 8H10.5M8 5.3L10.7 8L8 10.7" fill="none" stroke="#ffffff" stroke-width="1.8"/></svg><div class="t" style="left:335px;top:362px;font-weight:bold;color:#e8e8e8">marzec</div><div class="t" style="left:393px;top:362px;font-weight:bold;color:#e8e8e8">2020</div><div class="t" style="left:224.5px;width:60px;text-align:center;top:385px;color:#dddddd">pon.</div><div class="t" style="left:265.5px;width:60px;text-align:center;top:385px;color:#dddddd">wt.</div><div class="t" style="left:306.5px;width:60px;text-align:center;top:385px;color:#dddddd">śr.</div><div class="t" style="left:347.5px;width:60px;text-align:center;top:385px;color:#dddddd">czw.</div><div class="t" style="left:388.5px;width:60px;text-align:center;top:385px;color:#dddddd">pt.</div><div class="t" style="left:429.5px;width:60px;text-align:center;top:385px;color:#ff1a1a">sob.</div><div class="t" style="left:470.5px;width:60px;text-align:center;top:385px;color:#ff1a1a">niedz.</div><div class="a " style="left:316px;top:424px;width:41px;height:21px;background:#0b45c4"></div><div class="t" style="left:234.5px;width:40px;text-align:center;top:405.5px;color:#7f7f7f">24</div><div class="t" style="left:275.5px;width:40px;text-align:center;top:405.5px;color:#7f7f7f">25</div><div class="t" style="left:316.5px;width:40px;text-align:center;top:405.5px;color:#7f7f7f">26</div><div class="t" style="left:357.5px;width:40px;text-align:center;top:405.5px;color:#7f7f7f">27</div><div class="t" style="left:398.5px;width:40px;text-align:center;top:405.5px;color:#7f7f7f">28</div><div class="t" style="left:439.5px;width:40px;text-align:center;top:405.5px;color:#7f7f7f">29</div><div class="t" style="left:480.5px;width:40px;text-align:center;top:405.5px;color:#ff1a1a">1</div><div class="t" style="left:234.5px;width:40px;text-align:center;top:426.5px;color:#dddddd">2</div><div class="t" style="left:275.5px;width:40px;text-align:center;top:426.5px;color:#dddddd">3</div><div class="t" style="left:316.5px;width:40px;text-align:center;top:426.5px;color:#b8c4e0">4</div><div class="t" style="left:357.5px;width:40px;text-align:center;top:426.5px;color:#dddddd">5</div><div class="t" style="left:398.5px;width:40px;text-align:center;top:426.5px;color:#dddddd">6</div><div class="t" style="left:439.5px;width:40px;text-align:center;top:426.5px;color:#ff1a1a">7</div><div class="t" style="left:480.5px;width:40px;text-align:center;top:426.5px;color:#ff1a1a">8</div><div class="t" style="left:234.5px;width:40px;text-align:center;top:447.5px;color:#dddddd">9</div><div class="t" style="left:275.5px;width:40px;text-align:center;top:447.5px;color:#dddddd">10</div><div class="t" style="left:316.5px;width:40px;text-align:center;top:447.5px;color:#dddddd">11</div><div class="t" style="left:357.5px;width:40px;text-align:center;top:447.5px;color:#dddddd">12</div><div class="t" style="left:398.5px;width:40px;text-align:center;top:447.5px;color:#dddddd">13</div><div class="t" style="left:439.5px;width:40px;text-align:center;top:447.5px;color:#ff1a1a">14</div><div class="t" style="left:480.5px;width:40px;text-align:center;top:447.5px;color:#ff1a1a">15</div><div class="t" style="left:234.5px;width:40px;text-align:center;top:468.5px;color:#dddddd">16</div><div class="t" style="left:275.5px;width:40px;text-align:center;top:468.5px;color:#dddddd">17</div><div class="t" style="left:316.5px;width:40px;text-align:center;top:468.5px;color:#dddddd">18</div><div class="t" style="left:357.5px;width:40px;text-align:center;top:468.5px;color:#dddddd">19</div><div class="t" style="left:398.5px;width:40px;text-align:center;top:468.5px;color:#dddddd">20</div><div class="t" style="left:439.5px;width:40px;text-align:center;top:468.5px;color:#ff1a1a">21</div><div class="t" style="left:480.5px;width:40px;text-align:center;top:468.5px;color:#ff1a1a">22</div><div class="t" style="left:234.5px;width:40px;text-align:center;top:489.5px;color:#dddddd">23</div><div class="t" style="left:275.5px;width:40px;text-align:center;top:489.5px;color:#dddddd">24</div><div class="t" style="left:316.5px;width:40px;text-align:center;top:489.5px;color:#dddddd">25</div><div class="t" style="left:357.5px;width:40px;text-align:center;top:489.5px;color:#dddddd">26</div><div class="t" style="left:398.5px;width:40px;text-align:center;top:489.5px;color:#dddddd">27</div><div class="t" style="left:439.5px;width:40px;text-align:center;top:489.5px;color:#ff1a1a">28</div><div class="t" style="left:480.5px;width:40px;text-align:center;top:489.5px;color:#ff1a1a">29</div><div class="t" style="left:234.5px;width:40px;text-align:center;top:510.5px;color:#dddddd">30</div><div class="t" style="left:275.5px;width:40px;text-align:center;top:510.5px;color:#dddddd">31</div><div class="t" style="left:316.5px;width:40px;text-align:center;top:510.5px;color:#7f7f7f">1</div><div class="t" style="left:357.5px;width:40px;text-align:center;top:510.5px;color:#7f7f7f">2</div><div class="t" style="left:398.5px;width:40px;text-align:center;top:510.5px;color:#7f7f7f">3</div><div class="t" style="left:439.5px;width:40px;text-align:center;top:510.5px;color:#7f7f7f">4</div><div class="t" style="left:480.5px;width:40px;text-align:center;top:510.5px;color:#7f7f7f">5</div></body></html>
